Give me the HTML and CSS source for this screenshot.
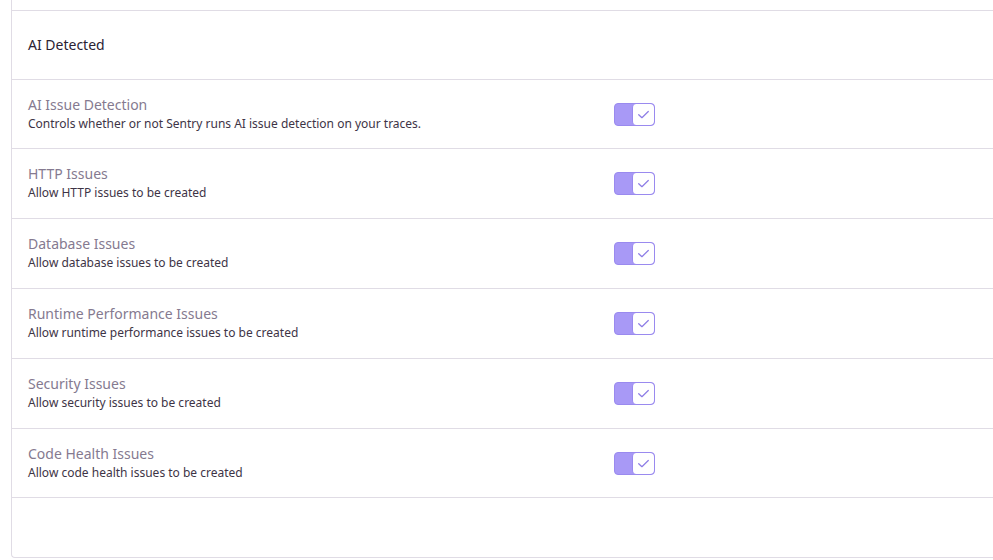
FILE: index.html
```html
<!DOCTYPE html>
<html>
<head>
<meta charset="utf-8">
<link rel="stylesheet" href="styles.css">
</head>
<body>
<div class="panel">
  <div class="prev"></div>
  <div class="header">AI Detected</div>
  <div class="row short">
    <div class="label">
      <div class="title">AI Issue Detection</div>
      <div class="desc">Controls whether or not Sentry runs AI issue detection on your traces.</div>
    </div>
    <div class="toggle"><span class="fill"></span><span class="knob"><svg viewBox="0 0 16 16" width="17" height="17"><path d="M3.5 8.2l3 2.8L12.5 5.2" fill="none" stroke="currentColor" stroke-width="1.2" stroke-linecap="round" stroke-linejoin="round"/></svg></span></div>
  </div>
  <div class="row">
    <div class="label">
      <div class="title">HTTP Issues</div>
      <div class="desc">Allow HTTP issues to be created</div>
    </div>
    <div class="toggle"><span class="fill"></span><span class="knob"><svg viewBox="0 0 16 16" width="17" height="17"><path d="M3.5 8.2l3 2.8L12.5 5.2" fill="none" stroke="currentColor" stroke-width="1.2" stroke-linecap="round" stroke-linejoin="round"/></svg></span></div>
  </div>
  <div class="row">
    <div class="label">
      <div class="title">Database Issues</div>
      <div class="desc">Allow database issues to be created</div>
    </div>
    <div class="toggle"><span class="fill"></span><span class="knob"><svg viewBox="0 0 16 16" width="17" height="17"><path d="M3.5 8.2l3 2.8L12.5 5.2" fill="none" stroke="currentColor" stroke-width="1.2" stroke-linecap="round" stroke-linejoin="round"/></svg></span></div>
  </div>
  <div class="row">
    <div class="label">
      <div class="title">Runtime Performance Issues</div>
      <div class="desc">Allow runtime performance issues to be created</div>
    </div>
    <div class="toggle"><span class="fill"></span><span class="knob"><svg viewBox="0 0 16 16" width="17" height="17"><path d="M3.5 8.2l3 2.8L12.5 5.2" fill="none" stroke="currentColor" stroke-width="1.2" stroke-linecap="round" stroke-linejoin="round"/></svg></span></div>
  </div>
  <div class="row">
    <div class="label">
      <div class="title">Security Issues</div>
      <div class="desc">Allow security issues to be created</div>
    </div>
    <div class="toggle"><span class="fill"></span><span class="knob"><svg viewBox="0 0 16 16" width="17" height="17"><path d="M3.5 8.2l3 2.8L12.5 5.2" fill="none" stroke="currentColor" stroke-width="1.2" stroke-linecap="round" stroke-linejoin="round"/></svg></span></div>
  </div>
  <div class="row short">
    <div class="label">
      <div class="title">Code Health Issues</div>
      <div class="desc">Allow code health issues to be created</div>
    </div>
    <div class="toggle"><span class="fill"></span><span class="knob"><svg viewBox="0 0 16 16" width="17" height="17"><path d="M3.5 8.2l3 2.8L12.5 5.2" fill="none" stroke="currentColor" stroke-width="1.2" stroke-linecap="round" stroke-linejoin="round"/></svg></span></div>
  </div>
  <div class="footer"></div>
</div>
</body>
</html>
```

FILE: styles.css
```css
html, body {
  margin: 0;
  padding: 0;
  background: #ffffff;
  overflow: hidden;
  font-family: "Noto Sans", "Open Sans", sans-serif;
}
.panel {
  margin-left: 11px;
  width: 1000px;
  border-left: 1px solid #e0dce5;
  border-bottom: 1px solid #e0dce5;
  border-bottom-left-radius: 4px;
}
.prev {
  height: 10px;
  border-bottom: 1px solid #e0dce5;
}
.header {
  height: 66px;
  padding-bottom: 2px;
  display: flex;
  align-items: center;
  padding-left: 16px;
  font-size: 14px;
  color: #2b2233;
  border-bottom: 1px solid #e0dce5;
}
.row {
  height: 69px;
  display: grid;
  grid-template-columns: 586px 1fr;
  align-items: center;
  padding-left: 16px;
  border-bottom: 1px solid #e0dce5;
}
.row.short {
  height: 68px;
}
.label {
  padding-bottom: 1px;
}
.title {
  font-size: 14px;
  line-height: 18px;
  color: #857a90;
}
.desc {
  font-size: 12px;
  line-height: 16px;
  color: #3e3446;
  margin-top: 2px;
}
.toggle {
  width: 41px;
  height: 23px;
  box-sizing: border-box;
  border: 1px solid #9a8aef;
  border-radius: 4px;
  background: #a899f6;
  display: flex;
  justify-content: flex-end;
  overflow: hidden;
}
.fill {
  flex: 1;
}
.knob {
  width: 22px;
  height: 21px;
  box-sizing: border-box;
  background: #ffffff;
  border-left: 1px solid #9a8aef;
  border-radius: 4px;
  display: flex;
  align-items: center;
  justify-content: center;
  color: #8e7ee6;
}
.footer {
  height: 59px;
}
```
